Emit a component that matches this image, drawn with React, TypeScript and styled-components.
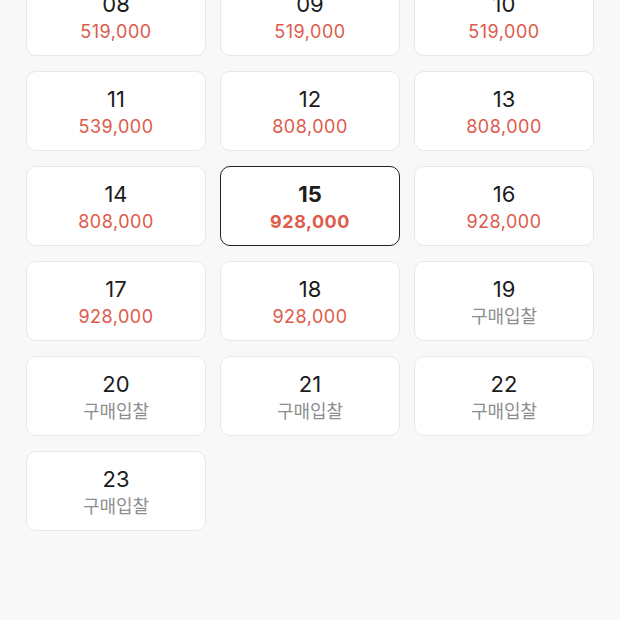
import React from 'react'
import styled, { createGlobalStyle } from 'styled-components'

const GlobalStyle = createGlobalStyle`
  html, body {
    margin: 0;
    padding: 0;
    background: #f8f8f8;
    font-family: 'Inter', 'Noto Sans CJK KR', sans-serif;
  }
`

type Slot = { num: string; price?: string }

const slots: Slot[] = [
  { num: '08', price: '519,000' },
  { num: '09', price: '519,000' },
  { num: '10', price: '519,000' },
  { num: '11', price: '539,000' },
  { num: '12', price: '808,000' },
  { num: '13', price: '808,000' },
  { num: '14', price: '808,000' },
  { num: '15', price: '928,000' },
  { num: '16', price: '928,000' },
  { num: '17', price: '928,000' },
  { num: '18', price: '928,000' },
  { num: '19' },
  { num: '20' },
  { num: '21' },
  { num: '22' },
  { num: '23' },
]

const SELECTED = '15'

export default function App() {
  return (
    <>
      <GlobalStyle />
      <S.Page>
        <S.Grid>
          {slots.map(s => (
            <S.Card key={s.num} $active={s.num === SELECTED}>
              <S.Num $active={s.num === SELECTED}>{s.num}</S.Num>
              {s.price ? (
                <S.Price $active={s.num === SELECTED}>{s.price}</S.Price>
              ) : (
                <S.Bid>구매입찰</S.Bid>
              )}
            </S.Card>
          ))}
        </S.Grid>
      </S.Page>
    </>
  )
}

export const S = {
  Page: styled.div`
    width: 620px;
    height: 620px;
    overflow: hidden;
    background: #f8f8f8;
    box-sizing: border-box;
    padding: 0 26px;
  `,
  Grid: styled.div`
    display: grid;
    grid-template-columns: repeat(3, 180px);
    column-gap: 14px;
    row-gap: 15px;
    margin-top: -24px;
  `,
  Card: styled.div<{ $active?: boolean }>`
    height: 80px;
    box-sizing: border-box;
    background: #fff;
    border: ${p => (p.$active ? '1.5px solid #222' : '1px solid #e8e8e8')};
    border-radius: 10px;
    display: flex;
    flex-direction: column;
    align-items: center;
    justify-content: center;
    gap: 4px;
    padding-top: 2px;
  `,
  Num: styled.div<{ $active?: boolean }>`
    font-size: 22px;
    line-height: 26px;
    color: #1c1c1c;
    font-weight: ${p => (p.$active ? 700 : 400)};
  `,
  Price: styled.div<{ $active?: boolean }>`
    font-size: 18px;
    line-height: 22px;
    color: #de5a4a;
    font-weight: ${p => (p.$active ? 700 : 400)};
    letter-spacing: 0.5px;
  `,
  Bid: styled.div`
    font-size: 18px;
    line-height: 22px;
    color: #8e8e8e;
  `,
}
